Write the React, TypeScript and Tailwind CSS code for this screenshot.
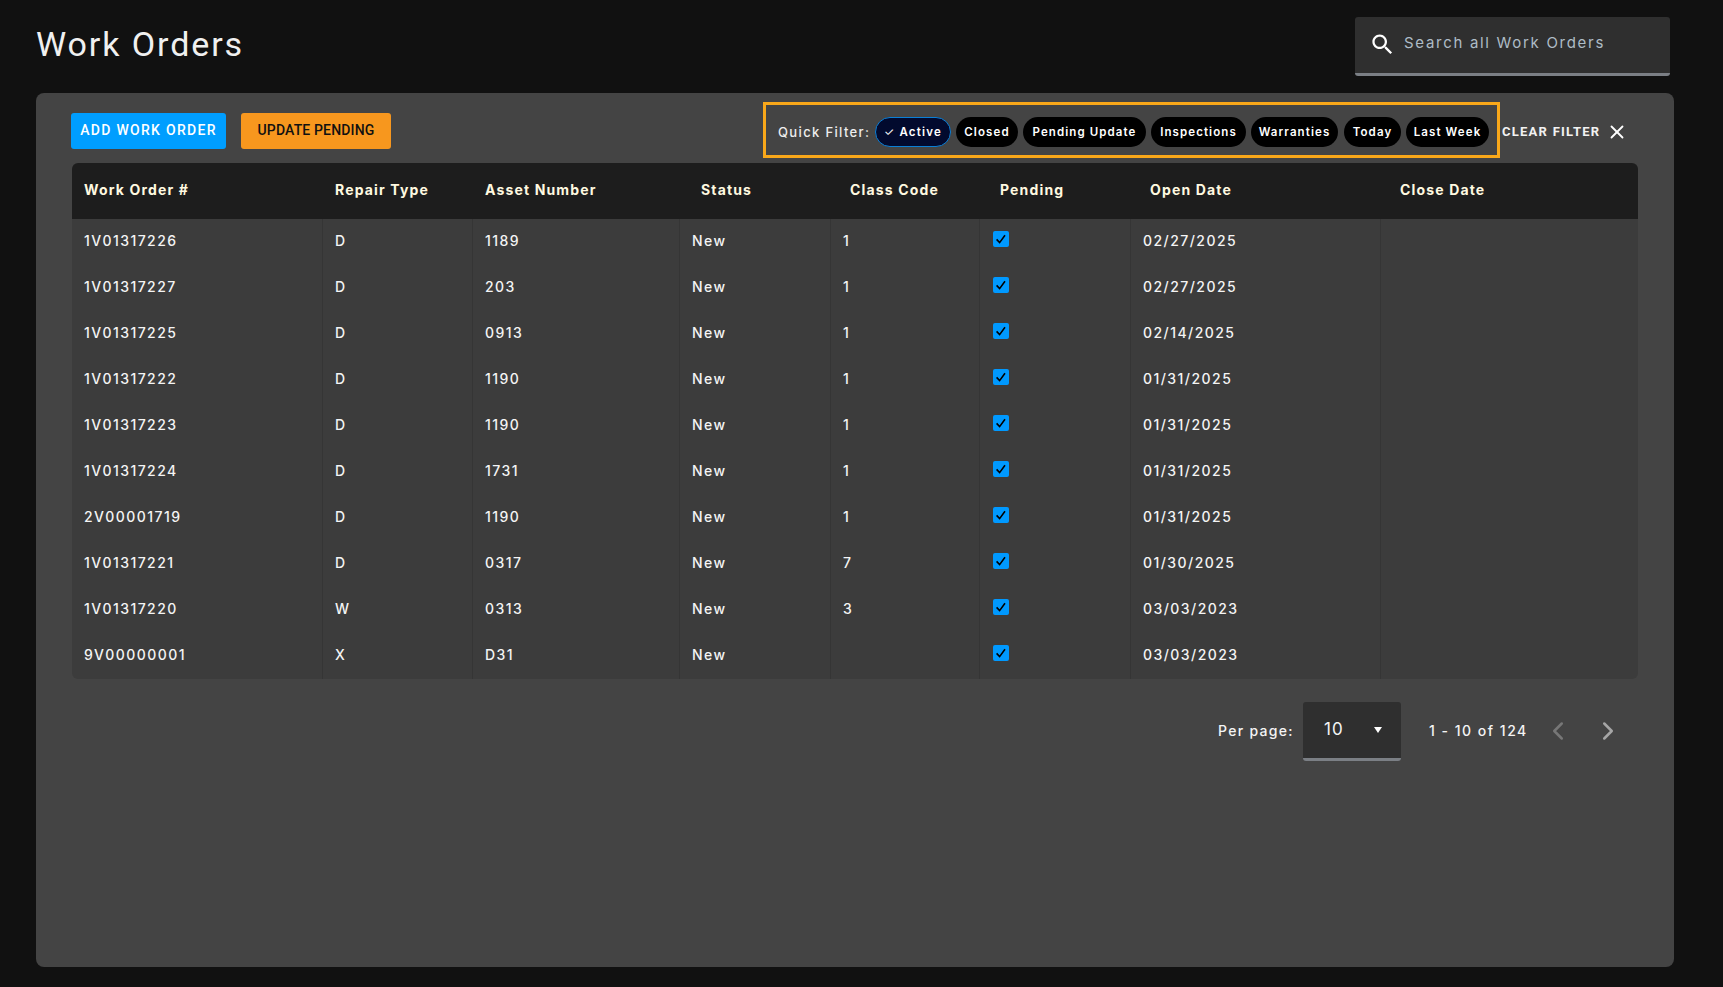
import { ChevronLeft, ChevronRight, X } from "lucide-react";

const rows = [
  ["1V01317226", "D", "1189", "New", "1", "02/27/2025"],
  ["1V01317227", "D", "203", "New", "1", "02/27/2025"],
  ["1V01317225", "D", "0913", "New", "1", "02/14/2025"],
  ["1V01317222", "D", "1190", "New", "1", "01/31/2025"],
  ["1V01317223", "D", "1190", "New", "1", "01/31/2025"],
  ["1V01317224", "D", "1731", "New", "1", "01/31/2025"],
  ["2V00001719", "D", "1190", "New", "1", "01/31/2025"],
  ["1V01317221", "D", "0317", "New", "7", "01/30/2025"],
  ["1V01317220", "W", "0313", "New", "3", "03/03/2023"],
  ["9V00000001", "X", "D31", "New", "", "03/03/2023"],
];

const headers = ["Work Order #", "Repair Type", "Asset Number", "Status", "Class Code", "Pending", "Open Date", "Close Date"];

const chips = [
  { label: "Closed", w: "w-[62px] ml-[5px]" },
  { label: "Pending Update", w: "w-[123px] ml-[5px]" },
  { label: "Inspections", w: "w-[95px] ml-[5px]" },
  { label: "Warranties", w: "w-[87px] ml-[5px]" },
  { label: "Today", w: "w-[57px] ml-[6px]" },
  { label: "Last Week", w: "w-[83px] ml-[5px]" },
];

export default function App() {
  return (
    <div className="relative h-[987px] w-full overflow-hidden bg-[#111111] [font-family:Inter,sans-serif] text-white">
      {/* Header */}
      <header className="flex h-[93px] items-start justify-between pl-9 pr-[53px]">
        <h1 className="mt-[23px] [font-family:Roboto,sans-serif] text-[34px] leading-[42px] font-normal tracking-[1.9px] text-[#f0f0f0]">
          Work Orders
        </h1>
        <div className="mt-[17px] flex h-[59px] w-[315px] items-start rounded-[3px] border-b-[3px] border-[#7b7f85] bg-[#2f2f2f] pl-[14px] pt-[14px]">
          <svg viewBox="0 0 24 24" className="h-[27px] w-[27px]" fill="#ffffff">
            <path d="M15.5 14h-.79l-.28-.27C15.41 12.59 16 11.11 16 9.5 16 5.91 13.09 3 9.5 3S3 5.91 3 9.5 5.91 16 9.5 16c1.61 0 3.09-.59 4.23-1.57l.27.28v.79l5 4.99L20.49 19l-4.99-5zm-6 0C7.01 14 5 11.99 5 9.5S7.01 5 9.5 5 14 7.01 14 9.5 11.99 14 9.5 14z" />
          </svg>
          <span className="ml-2 text-[15px] leading-[24px] tracking-[1.7px] text-[#aebcc6]">Search all Work Orders</span>
        </div>
      </header>

      {/* Card */}
      <main className="relative ml-9 h-[874px] w-[1638px] rounded-lg bg-[#444444] pl-9 pr-9">
        <div className="flex h-[70px] items-start">
          <button className="-ml-px mt-5 h-9 w-[155px] rounded-[3px] bg-[#009eff] pb-0.5 text-center [font-family:Roboto,sans-serif] text-[14px] font-medium tracking-[1.3px] text-white">
            ADD WORK ORDER
          </button>
          <button className="ml-[15px] mt-5 h-9 w-[150px] rounded-[3px] bg-[#f7971e] pb-0.5 text-center [font-family:Roboto,sans-serif] text-[14px] font-medium tracking-[0.15px] text-[#111111]">
            UPDATE PENDING
          </button>
          <div className="ml-[372px] mt-[9px] flex h-[56px] w-[737px] items-center border-[3px] border-[#f9a81a] pl-3 pt-1">
            <span className="mt-0.5 w-[97px] text-[13px] font-medium tracking-[1.35px] text-[#eeeeee]">Quick Filter:</span>
            <span className="flex h-[30px] w-[76px] items-center justify-center rounded-full border border-[#0a7fd6] bg-[#020a2e] pt-0.5 text-[11.5px] font-semibold tracking-[1.2px]">
              <span className="font-normal">✓</span>&nbsp;Active
            </span>
            {chips.map((c) => (
              <span key={c.label} className={`flex h-[30px] ${c.w} items-center justify-center rounded-full bg-black pt-0.5 text-[11.5px] font-semibold tracking-[1.1px]`}>
                {c.label}
              </span>
            ))}
          </div>
          <span className="ml-[2px] mt-[30px] [font-family:Roboto,sans-serif] text-[13px] leading-[18px] font-bold tracking-[1.25px] text-[#f2f2f2]">
            CLEAR FILTER
          </span>
          <X size={22} strokeWidth={2} className="ml-[6px] mt-[28px] text-white" />
        </div>

        {/* Table */}
        <div className="overflow-hidden rounded-md">
          <div className="grid h-14 grid-cols-[251px_150px_216px_149px_150px_150px_250px_200px] bg-[#1d1d1d] text-[14px] font-bold tracking-[1.15px] text-[#fff9e0]">
            {headers.map((h) => (
              <div key={h} className="pl-3 pt-[17px] leading-[20px]">
                {h}
              </div>
            ))}
          </div>
          {rows.map((r) => (
            <div key={r[0]} className="grid h-[46px] grid-cols-[251px_150px_207px_151px_149px_151px_250px_257px] bg-[#3c3c3c] text-[14px] font-medium leading-[44px] tracking-[1.45px] text-[#f4f4f4]">
              <div className="border-r border-[#353535] pl-3">{r[0]}</div>
              <div className="border-r border-[#353535] pl-3">{r[1]}</div>
              <div className="border-r border-[#353535] pl-3">{r[2]}</div>
              <div className="border-r border-[#353535] pl-3">{r[3]}</div>
              <div className="border-r border-[#353535] pl-3">{r[4]}</div>
              <div className="border-r border-[#353535] pl-[13px]">
                <span className="mt-3 flex h-4 w-4 items-center justify-center rounded-[2px] bg-[#0099ff]">
                  <svg viewBox="0 0 16 16" className="h-4 w-4" fill="none" stroke="#000000" strokeWidth="1.6">
                    <path d="M3.6 8.4 L6.6 11.6 L12 4.2" />
                  </svg>
                </span>
              </div>
              <div className="border-r border-[#353535] pl-3">{r[5]}</div>
              <div />
            </div>
          ))}
        </div>

        {/* Pagination */}
        <div className="absolute left-0 top-[609px] flex h-[59px] w-full items-start">
          <span className="ml-[1182px] mt-[19px] w-[85px] text-[14px] font-medium leading-[20px] tracking-[1.3px] text-[#f4f4f4]">Per page:</span>
          <div className="flex h-[59px] w-[98px] items-start rounded-[3px] border-b-[3px] border-[#7b7f85] bg-[#2f2f2f]">
            <span className="ml-[21px] mt-[15px] text-[17px] leading-[24px] tracking-[1px] text-[#f4f4f4]">10</span>
            <svg viewBox="0 0 8 6" className="ml-[30px] mt-[25px] h-[6px] w-[8px]" fill="#ffffff">
              <path d="M0 0 H8 L4 6 Z" />
            </svg>
          </div>
          <span className="ml-[28px] mt-[19px] text-[14px] font-medium leading-[20px] tracking-[1.5px] text-[#f4f4f4]">1 - 10 of 124</span>
          <ChevronLeft size={30} strokeWidth={2} className="ml-[15px] mt-[14px] text-[#777777]" />
          <ChevronRight size={30} strokeWidth={2} className="ml-[20px] mt-[14px] text-[#a6a6a6]" />
        </div>
      </main>
    </div>
  );
}
